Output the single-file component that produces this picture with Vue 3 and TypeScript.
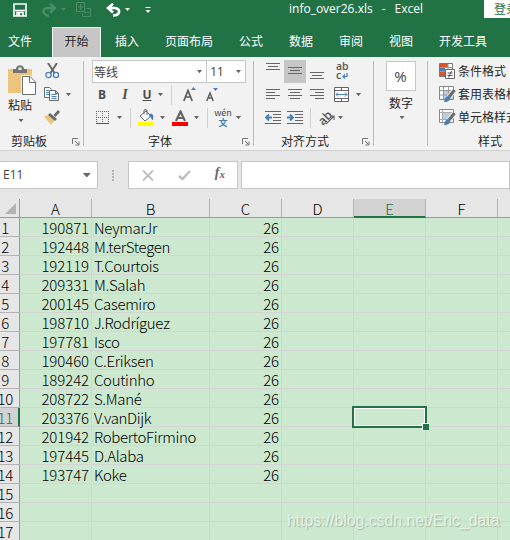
<script setup lang="ts">
interface Player {
  id: number
  name: string
  age: number
}

const tabs: string[] = ['文件', '开始', '插入', '页面布局', '公式', '数据', '审阅', '视图', '开发工具']
const activeTab = '开始'

const columns: string[] = ['A', 'B', 'C', 'D', 'E', 'F', '']

const players: Player[] = [
  { id: 190871, name: 'NeymarJr', age: 26 },
  { id: 192448, name: 'M.terStegen', age: 26 },
  { id: 192119, name: 'T.Courtois', age: 26 },
  { id: 209331, name: 'M.Salah', age: 26 },
  { id: 200145, name: 'Casemiro', age: 26 },
  { id: 198710, name: 'J.Rodríguez', age: 26 },
  { id: 197781, name: 'Isco', age: 26 },
  { id: 190460, name: 'C.Eriksen', age: 26 },
  { id: 189242, name: 'Coutinho', age: 26 },
  { id: 208722, name: 'S.Mané', age: 26 },
  { id: 203376, name: 'V.vanDijk', age: 26 },
  { id: 201942, name: 'RobertoFirmino', age: 26 },
  { id: 197445, name: 'D.Alaba', age: 26 },
  { id: 193747, name: 'Koke', age: 26 },
]

const rowNumbers: number[] = Array.from({ length: 17 }, (_, i) => i + 1)
const selected = { row: 11, column: 'E' }

function cellText(row: number, column: string): string {
  const player = players[row - 1]
  if (!player) return ''
  if (column === 'A') return String(player.id)
  if (column === 'B') return player.name
  if (column === 'C') return String(player.age)
  return ''
}
</script>

<template>
  <div class="window">
    <header class="titlebar">
      <svg class="save" width="14" height="14" viewBox="0 0 14 14"><path d="M1 1H13V13H1Z" fill="none" stroke="#fff" stroke-width="1.6" /><path d="M2 7.5H12M4 13V9.5H10V13" fill="none" stroke="#fff" stroke-width="1.6" /><path d="M5 10H7V13H5Z" fill="#fff" /></svg>
      <svg class="redo" width="26" height="14" viewBox="0 0 26 14"><path d="M7 12.500C-1 12 0 5 7 5H12M8 .8L13 5L8 9.500" fill="none" stroke="#4b8d69" stroke-width="2.400" /><path d="M19 5H24L21.500 8Z" fill="#4b8d69" /></svg>
      <svg class="dup" width="16" height="15" viewBox="0 0 16 15"><path d="M.5 .5H8.500V9.500H.5ZM4.500 2V8M2 5H7M10.500 6.500H14.500V14.500H6.500V11.500M8 10.500H13" fill="none" stroke="#4b8d69" /></svg>
      <svg class="undo" width="26" height="14" viewBox="0 0 26 14"><path d="M7 12.500C15 12 15 5 8 5H2M7 .8L2 5L7 9.500" fill="none" stroke="#fff" stroke-width="2.600" /><path d="M19 5H24L21.500 8Z" fill="#fff" /></svg>
      <svg class="more" width="6" height="7" viewBox="0 0 6 7"><path d="M.5 .5H5.500" stroke="#fff" /><path d="M.5 3H5.500L3 6Z" fill="#fff" /></svg>
      <span class="filename"><span>info_over26.xls</span><span>-</span><span>Excel</span></span>
      <span class="login">登录</span>
    </header>

    <nav class="tabs">
      <span v-for="tab in tabs" :key="tab" class="tab" :class="{ active: tab === activeTab }">{{ tab }}</span>
    </nav>

    <section class="ribbon">
      <div class="group clipboard">
        <div class="tools">
          <div class="paste">
            <svg width="28" height="31" viewBox="0 0 28 31"><path d="M0 4H24V28H0Z" fill="#edc47d" /><path d="M5 4H8C8-1 16-1 16 4H19V8H5Z" fill="#737373" /><path d="M10.500 2.500H13.500V5H10.500Z" fill="#f2f2f2" /><path d="M13 10H22.500L29 16V31H13Z" fill="#f2f2f2" /><path d="M14.500 11.500H22L27.500 17V29.500H14.500Z" fill="#fff" stroke="#6d6d6d" /><path d="M21.500 11.500V17.500H27" fill="none" stroke="#6d6d6d" /></svg>
            <span class="paste-text">粘贴</span>
            <i class="caret"></i>
          </div>
          <div class="edit">
            <svg class="cut" width="15" height="16" viewBox="0 0 15 16"><path d="M3 0L9.500 10M12 0L5.500 10" stroke="#696969" stroke-width="2" /><circle cx="3.500" cy="12" r="2.600" fill="none" stroke="#477eb5" stroke-width="1.300" /><circle cx="11" cy="12" r="2.600" fill="none" stroke="#477eb5" stroke-width="1.300" /></svg>
            <div class="copyrow">
              <svg width="16" height="15" viewBox="0 0 16 15"><path d="M.5 .5H5.500L7.500 2.500V10.500H.5Z" fill="#fff" stroke="#696969" /><path d="M2 3.500H5M2 5.500H5M2 7.500H5" stroke="#477eb5" /><path d="M5.500 3.500H11.500L14.500 6.500V13.500H5.500Z" fill="#fff" stroke="#696969" /><path d="M11.500 3.500V6.500H14.500" fill="none" stroke="#696969" /><path d="M7.500 7.500H12.500M7.500 9.500H12.500M7.500 11.500H12.500" stroke="#477eb5" /></svg>
              <i class="caret"></i>
            </div>
            <svg class="brush" width="17" height="15" viewBox="0 0 17 15"><path d="M0 6L5 5L11 10L7 15Z" fill="#edc47d" /><path d="M6 3L13 9L11 11L4 5Z" fill="#696969" /><path d="M9.500 5L14 0L16 2L11.500 7Z" fill="#696969" /></svg>
          </div>
        </div>
        <div class="caption"><span>剪贴板</span><svg class="launcher" width="8" height="8" viewBox="0 0 8 8"><path d="M.5 6V.5H6M3 3L6.500 6.500M7 3.500V7H3.500" fill="none" stroke="#777" /></svg></div>
      </div>

      <div class="group font">
        <div class="combos">
          <div class="combo family"><span>等线</span><i class="caret"></i></div>
          <div class="combo size"><span>11</span><i class="caret"></i></div>
        </div>
        <div class="row fontstyle">
          <b class="glyph bold">B</b><em class="glyph italic">I</em><u class="glyph under">U</u><i class="caret c1"></i><i class="sep s1"></i>
          <svg class="grow" width="14" height="15" viewBox="0 0 14 15"><path d="M.8 14L5 3.500L9.200 14M2.500 10H7.500" fill="none" stroke="#5c5c5c" stroke-width="1.700" /><path d="M8 3H13L10.500 0Z" fill="#477eb5" /></svg>
          <svg class="shrink" width="13" height="15" viewBox="0 0 13 15"><path d="M.8 14L4 6L7.200 14M2 11H6" fill="none" stroke="#5c5c5c" stroke-width="1.500" /><path d="M7 1H12L9.500 4Z" fill="#477eb5" /></svg>
        </div>
        <div class="row fontcolor">
          <svg class="borders" width="14" height="14" viewBox="0 0 14 14"><path d="M.5 0V13M6.500 0V13M12.500 0V13M0 .5H13M0 6.500H13" stroke="#666" stroke-dasharray="1 1" /><path d="M0 12.500H13" stroke="#555" /></svg>
          <i class="caret c2"></i><i class="sep s2"></i>
          <svg class="fill" width="17" height="17" viewBox="0 0 17 17"><path d="M2 7L8 2L13 7L7 12Z" fill="#fff" stroke="#696969" /><path d="M6 5V1.500C6 0 9 0 9 2V6" fill="none" stroke="#696969" /><path d="M11 5C15 4 16 6 15 11C13 11 14 8 11 7Z" fill="#477eb5" /><path d="M0 13H16V17H0Z" fill="#ffff00" /></svg>
          <i class="caret c3"></i>
          <svg class="ink" width="16" height="16" viewBox="0 0 16 16"><path d="M4 11L8.500 1.500L13 11M5.500 8H11.500" fill="none" stroke="#666" stroke-width="2.200" /><path d="M0 12H16V16H0Z" fill="#ff0000" /></svg>
          <i class="caret c4"></i><i class="sep s3"></i>
          <span class="phonetic"><small>wén</small><strong>文</strong></span>
          <i class="caret c5"></i>
        </div>
        <div class="caption"><span>字体</span><svg class="launcher" width="8" height="8" viewBox="0 0 8 8"><path d="M.5 6V.5H6M3 3L6.500 6.500M7 3.500V7H3.500" fill="none" stroke="#777" /></svg></div>
      </div>

      <div class="group align">
        <div class="row a1">
          <span class="cell"><svg width="14" height="14" viewBox="0 0 14 14"><path d="M0 .5H14M2 3.500H12M0 6.500H14" stroke="#666" /></svg></span>
          <span class="cell on"><svg width="14" height="14" viewBox="0 0 14 14"><path d="M0 4.500H14M2 7.500H12M0 10.500H14" stroke="#666" /></svg></span>
          <span class="cell"><svg width="14" height="17" viewBox="0 0 14 17"><path d="M0 9.500H14M2 12.500H12M0 15.500H14" stroke="#666" /></svg></span>
          <span class="wrap"><b>ab</b><b>c<svg width="6" height="6" viewBox="0 0 6 6"><path d="M5 0V3.500H1M3 1.500L1 3.500L3 5.500" fill="none" stroke="#477eb5" stroke-width="1.200" /></svg></b></span>
        </div>
        <div class="row a2">
          <span class="cell"><svg width="14" height="11" viewBox="0 0 14 11"><path d="M0 .5H14M0 3.500H9M0 6.500H14M0 9.500H9" stroke="#666" /></svg></span>
          <span class="cell"><svg width="14" height="11" viewBox="0 0 14 11"><path d="M0 .5H14M2 3.500H12M0 6.500H14M2 9.500H12" stroke="#666" /></svg></span>
          <span class="cell"><svg width="14" height="11" viewBox="0 0 14 11"><path d="M0 .5H14M5 3.500H14M0 6.500H14M5 9.500H14" stroke="#666" /></svg></span>
          <svg class="merge" width="15" height="15" viewBox="0 0 15 15"><path d="M.5 .5H14.500V14.500H.5ZM.5 3.500H14.500M.5 11.500H14.500M7.500 .5V3.500M7.500 11.500V14.500" fill="#fff" stroke="#666" /><path d="M2 7.500H13M4 5.500L2 7.500L4 9.500M11 5.500L13 7.500L11 9.500" fill="none" stroke="#477eb5" /></svg>
          <i class="caret c6"></i>
        </div>
        <div class="row a3">
          <svg width="16" height="13" viewBox="0 0 16 13"><path d="M0 .5H16M8 3.500H16M8 6.500H16M8 9.500H16M0 12.500H16" stroke="#666" /><path d="M7 6.500H1M4 3.500L1 6.500L4 9.500" fill="none" stroke="#477eb5" stroke-width="1.800" /></svg>
          <svg class="indent" width="16" height="13" viewBox="0 0 16 13"><path d="M0 .5H16M8 3.500H16M8 6.500H16M8 9.500H16M0 12.500H16" stroke="#666" /><path d="M0 6.500H6M3 3.500L6 6.500L3 9.500" fill="none" stroke="#477eb5" stroke-width="1.800" /></svg>
          <i class="sep s4"></i>
          <span class="orient"><b>ab</b><svg width="9" height="10" viewBox="0 0 9 10"><path d="M0 9L7.500 1.500M4 1H8V5" fill="none" stroke="#666" stroke-width="1.200" /></svg></span>
          <i class="caret c7"></i>
        </div>
        <div class="caption"><span>对齐方式</span><svg class="launcher" width="8" height="8" viewBox="0 0 8 8"><path d="M.5 6V.5H6M3 3L6.500 6.500M7 3.500V7H3.500" fill="none" stroke="#777" /></svg></div>
      </div>

      <div class="group number">
        <span class="percent">%</span>
        <span class="number-text">数字</span>
        <i class="caret"></i>
      </div>

      <div class="group styles">
        <div class="style-row"><svg width="17" height="17" viewBox="0 0 17 17"><path d="M.5 .5H13.500V13.500H.5Z" fill="#fff" stroke="#777" /><path d="M1 1H9V4H1ZM1 9H6V13H1Z" fill="#d9532c" /><path d="M1 5H6V8H1Z" fill="#477eb5" /><path d="M9 1V13M1 4.500H13M1 8.500H13" stroke="#999" /><path d="M6.500 6.500H15.500V15.500H6.500Z" fill="#fff" stroke="#666" /><path d="M8.500 10H13.500M8.500 12.500H13.500M12.500 8L9.500 14.500" stroke="#555" /></svg><span>条件格式</span></div>
        <div class="style-row"><svg width="17" height="17" viewBox="0 0 17 17"><path d="M.5 .5H14.500V13.500H.5Z" fill="#fff" stroke="#888" /><path d="M4 4H14V13H4Z" fill="#b9cce2" /><path d="M4.500 1V13M9.500 1V13M1 4.500H14M1 9H14" stroke="#999" /><path d="M15.500 4L10 11" stroke="#f2f2f2" stroke-width="5" /><path d="M15.500 4L10 11" stroke="#696969" stroke-width="3" /><path d="M5 16C6 11 8 9 11 11C12 14 9 16 5 16Z" fill="#477eb5" /></svg><span>套用表格格式</span></div>
        <div class="style-row"><svg width="17" height="17" viewBox="0 0 17 17"><path d="M.5 .5H14.500V13.500H.5Z" fill="#fff" stroke="#888" /><path d="M4 4H12V10H4Z" fill="#b9cce2" /><path d="M3.500 1V13M1 3.500H14M1 10.500H14" stroke="#aaa" /><path d="M15.500 4L10 11" stroke="#f2f2f2" stroke-width="5" /><path d="M15.500 4L10 11" stroke="#696969" stroke-width="3" /><path d="M5 16C6 11 8 9 11 11C12 14 9 16 5 16Z" fill="#477eb5" /></svg><span>单元格样式</span></div>
        <span class="styles-caption">样式</span>
      </div>
    </section>

    <section class="formula">
      <div class="namebox"><span>E11</span><i class="caret wide"></i></div>
      <svg class="grip" width="2" height="11" viewBox="0 0 2 11"><path d="M0 0H2V2H0ZM0 3H2V5H0ZM0 6H2V8H0ZM0 9H2V11H0Z" fill="#b3b3b3" /></svg>
      <div class="actions">
        <svg class="cancel" width="12" height="11" viewBox="0 0 12 11"><path d="M1 .5L11 10.500M11 .5L1 10.500" stroke="#bdbdbd" stroke-width="1.800" /></svg>
        <svg class="accept" width="13" height="11" viewBox="0 0 13 11"><path d="M1 6L4.500 9L12 1" fill="none" stroke="#bdbdbd" stroke-width="2.400" /></svg>
        <span class="fx">f<sub>x</sub></span>
      </div>
      <div class="input"></div>
    </section>

    <main class="sheet">
      <div class="line heads">
        <span class="corner"><svg width="11" height="11" viewBox="0 0 11 11"><path d="M11 0V11H0Z" fill="#b2b2b2" /></svg></span>
        <span v-for="(c, i) in columns" :key="i" class="head" :class="{ current: c === selected.column }">{{ c }}</span>
      </div>
      <div v-for="r in rowNumbers" :key="r" class="line">
        <span class="rownum" :class="{ current: r === selected.row, short: r < 10 }">{{ r }}</span>
        <span v-for="(c, i) in columns" :key="i" class="data" :class="{ num: c !== 'B' }">{{ cellText(r, c) }}<i v-if="r === selected.row && c === selected.column" class="cursor"><i class="handle"></i></i></span>
      </div>
      <span class="watermark">https://blog.csdn.net/Eric_data</span>
    </main>
  </div>
</template>

<style>
body {
  margin: 0;
  overflow: hidden;
}
</style>

<style scoped>
.window {
  width: 510px;
  height: 540px;
  overflow: hidden;
  background: #e6e6e6;
  font-family: "Noto Sans CJK SC", sans-serif;
  font-size: 12px;
  line-height: 16px;
  color: #262626;
  white-space: nowrap;
}
.window * { box-sizing: border-box; }
svg { display: block; flex: none; }
.titlebar {
  display: flex;
  align-items: flex-start;
  height: 27px;
  background: #217346;
  color: #fff;
}
.save { margin: 3px 0 0 13px; }
.redo { margin: 3px 0 0 15px; }
.dup { margin: 2px 0 0 8px; }
.undo { margin: 3px 0 0 14px; }
.more { margin: 7px 0 0 13px; }
.filename { display: flex; gap: 9px; flex: none; margin: 1px 0 0 138px; width: 195px; font-family: "Open Sans", sans-serif; font-size: 12px; }
.login { flex: none; width: 40px; height: 18px; padding: 1px 0 0 10px; background: #fff; color: #217346; }
.tabs { display: flex; height: 30px; background: #217346; color: #fff; }
.tab { flex: none; padding: 6px 13px 0; }
.tab:first-child { padding: 6px 20px 0 8px; }
.tab.active { width: 49px; padding: 5px 0 0; text-align: center; background: #c6c6c6; color: #262626; border: 1px solid #f2f2f2; border-bottom: 0; }
.tab:nth-child(3) { padding-left: 14px; }
.ribbon { display: flex; height: 94px; background: #f2f2f2; border-bottom: 1px solid #d2d2d2; }
.group { position: relative; flex: none; height: 93px; }
.group:not(.styles) { background: linear-gradient(#b8b8b8, #b8b8b8) right 4px / 1px 85px no-repeat; }
.clipboard { width: 84px; }
.font { width: 170px; }
.align { width: 120px; }
.number { width: 54px; }
.styles { width: 82px; overflow: hidden; }
.caret { flex: none; display: block; width: 5px; height: 3px; background: #666; clip-path: polygon(0 0, 100% 0, 50% 110%); }
.caret.wide { width: 8px; height: 4px; }
.tools { display: flex; height: 74px; }
.paste { display: flex; flex-direction: column; align-items: center; width: 43px; padding-top: 8px; }
.paste svg { margin-left: 1px; }
.paste-text { margin: 1px 3px 0 0; }
.paste .caret { margin: 6px 0 0 -1px; }
.edit { display: flex; flex-direction: column; padding: 6px 0 0 1px; }
.cut { margin-left: 1px; }
.copyrow { display: flex; align-items: center; margin-top: 8px; }
.copyrow .caret { margin-left: 6px; }
.brush { margin-top: 8px; }
.caption { display: flex; align-items: center; height: 19px; }
.clipboard .caption span { margin-left: 11px; width: 61px; }
.font .caption span { margin-left: 64px; width: 94px; }
.align .caption span { margin-left: 27px; width: 81px; }
.caption svg { margin-top: 3px; }
.combos { display: flex; height: 26px; padding: 3px 0 0 8px; }
.combo { display: flex; align-items: center; justify-content: space-between; height: 23px; padding: 0 4px 0 1px; border: 1px solid #c6c6c6; background: #fff; color: #444; }
.family { width: 115px; }
.size { width: 40px; margin-left: -1px; padding-left: 3px; font-family: "Open Sans", sans-serif; font-size: 12.500px; letter-spacing: -.5px; }
.row { display: flex; align-items: center; height: 24px; }
.font .fontstyle { height: 23px; }
.font .fontcolor { height: 25px; padding-bottom: 2px; }
.glyph { font-family: "Open Sans", sans-serif; font-size: 12px; color: #4d4d4d; font-weight: 700; width: 10px; text-align: center; }
.bold { margin-left: 13px; }
.italic { margin-left: 13px; font-family: "Liberation Serif", serif; font-size: 14px; font-style: italic; }
.under { margin-left: 12px; }
.c1 { margin-left: 6px; }
.sep { width: 1px; height: 20px; background: #d0d0d0; flex: none; }
.s1 { margin-left: 8px; }
.grow { margin-left: 11px; }
.shrink { margin-left: 9px; }
.borders { margin-left: 12px; }
.c2 { margin-left: 7px; }
.s2 { margin-left: 8px; }
.fill { margin-left: 7px; }
.c3 { margin-left: 5px; }
.ink { margin: 0 0 0 7px; }
.c4 { margin-left: 6px; }
.s3 { margin-left: 8px; }
.phonetic { display: flex; flex-direction: column; align-items: center; margin: 0 0 0 7px; width: 16px; }
.phonetic small { font-size: 9px; line-height: 10px; color: #444; }
.phonetic strong { font-size: 9px; line-height: 9px; color: #477eb5; }
.c5 { margin-left: 5px; }
.cell { display: flex; align-items: center; justify-content: center; width: 22px; height: 23px; }
.on { background: #c6c6c6; }
.align .a1 { height: 26px; padding: 3px 0 0 8px; align-items: flex-start; }
.align .a1 .cell { align-items: flex-start; padding-top: 3px; }
.align .a2 { height: 23px; padding-left: 8px; }
.align .a3 { height: 25px; padding: 0 0 2px 11px; }
.wrap { display: flex; flex-direction: column; margin: 2px 0 0 8px; color: #555; font-family: "Open Sans", sans-serif; font-size: 10.500px; }
.wrap b { display: flex; align-items: center; line-height: 9px; height: 9px; font-weight: 600; }
.wrap svg { margin-left: 1px; }
.merge { margin-left: 6px; }
.c6 { margin-left: 7px; }
.indent { margin-left: 6px; }
.s4 { margin-left: 7px; }
.orient { display: flex; margin-left: 7px; width: 17px; color: #555; font-family: "Open Sans", sans-serif; font-size: 12px; }
.orient b { transform: rotate(-45deg); font-weight: 600; }
.orient svg { margin: 5px 0 0 -6px; }
.c7 { margin-left: 3px; }
.number { display: flex; flex-direction: column; align-items: center; padding-top: 4px; }
.percent { display: flex; align-items: center; justify-content: center; width: 30px; height: 30px; margin-left: -1px; border: 1px solid #c6c6c6; background: #fff; font-family: "Open Sans", sans-serif; font-size: 15px; color: #444; }
.number-text { margin-top: 4px; }
.number .caret { margin: 5px 0 0 2px; }
.styles { padding: 3px 0 0 11px; }
.style-row { display: flex; align-items: center; height: 23px; gap: 2px; }
.style-row span { margin-top: -1px; }
.styles-caption { display: block; margin: 4px 0 0 39px; }
.formula { display: flex; height: 48px; padding-top: 10px; align-items: flex-start; }
.formula > div { height: 28px; background: #fff; border: 1px solid #c6c6c6; }
.namebox { display: flex; align-items: center; justify-content: space-between; width: 98px; padding: 0 6px 0 3px; border-left: 0 !important; font-family: "Open Sans", sans-serif; color: #444; }
.grip { margin: 9px 14px 0; }
.actions { display: flex; align-items: center; width: 110px; }
.cancel { margin-left: 13px; }
.accept { margin-left: 24px; }
.fx { margin: -4px 0 0 24px; font: italic 700 14px/20px "Liberation Serif", serif; color: #666; }
.fx sub { font-size: 11px; line-height: 0; vertical-align: -1px; }
.input { width: 270px; margin-left: 3px; }
.sheet { position: relative; height: 341px; font-size: 15px; font-weight: 300; color: #000; overflow: hidden; }
.line { display: grid; grid-template-columns: 20px 72px 118px 72px 72px 72px 72px 72px; height: 19px; line-height: 19px; }
.heads { background: #e6e6e6; }
.line:not(.heads) { background: #cce8cf; }
.corner { display: flex; align-items: center; padding: 1px 0 0 5px; border-right: 1px solid #999; border-bottom: 1px solid #999; }
.head { text-align: center; line-height: 20px; height: 19px; border-right: 1px solid #b3b3b3; border-bottom: 1px solid #999; }
.head.current { background: #d2d2d2; color: #217346; border-bottom: 2px solid #217346; }
.rownum { height: 19px; margin-left: -3px; padding-right: 6px; text-align: right; letter-spacing: -.3px; background: #e6e6e6; border-right: 1px solid #999; border-bottom: 1px solid #b3b3b3; }
.rownum.short { padding-right: 10px; }
.rownum.current { background: #d2d2d2; color: #217346; border-right: 2px solid #217346; padding-right: 5px; }
.data { position: relative; height: 19px; padding: 0 2px; letter-spacing: -.33px; border-right: 1px solid #d4d4d4; border-bottom: 1px solid #d4d4d4; }
.num { text-align: right; letter-spacing: -.1px; }
.cursor { position: absolute; z-index: 2; left: -2px; top: -2px; width: 75px; height: 22px; border: 2px solid #217346; box-shadow: inset 0 0 0 1px #fff; }
.handle { position: absolute; right: -4px; bottom: -4px; width: 7px; height: 7px; background: #217346; border: solid #fff; border-width: 1px 0 0 1px; }
.watermark { position: absolute; z-index: 3; left: 287px; top: 312px; font: 400 15.800px/20px "Liberation Sans", sans-serif; color: rgba(255, 255, 255, .65); text-shadow: 1px 1px 1px rgba(100, 120, 100, .4); }
</style>
